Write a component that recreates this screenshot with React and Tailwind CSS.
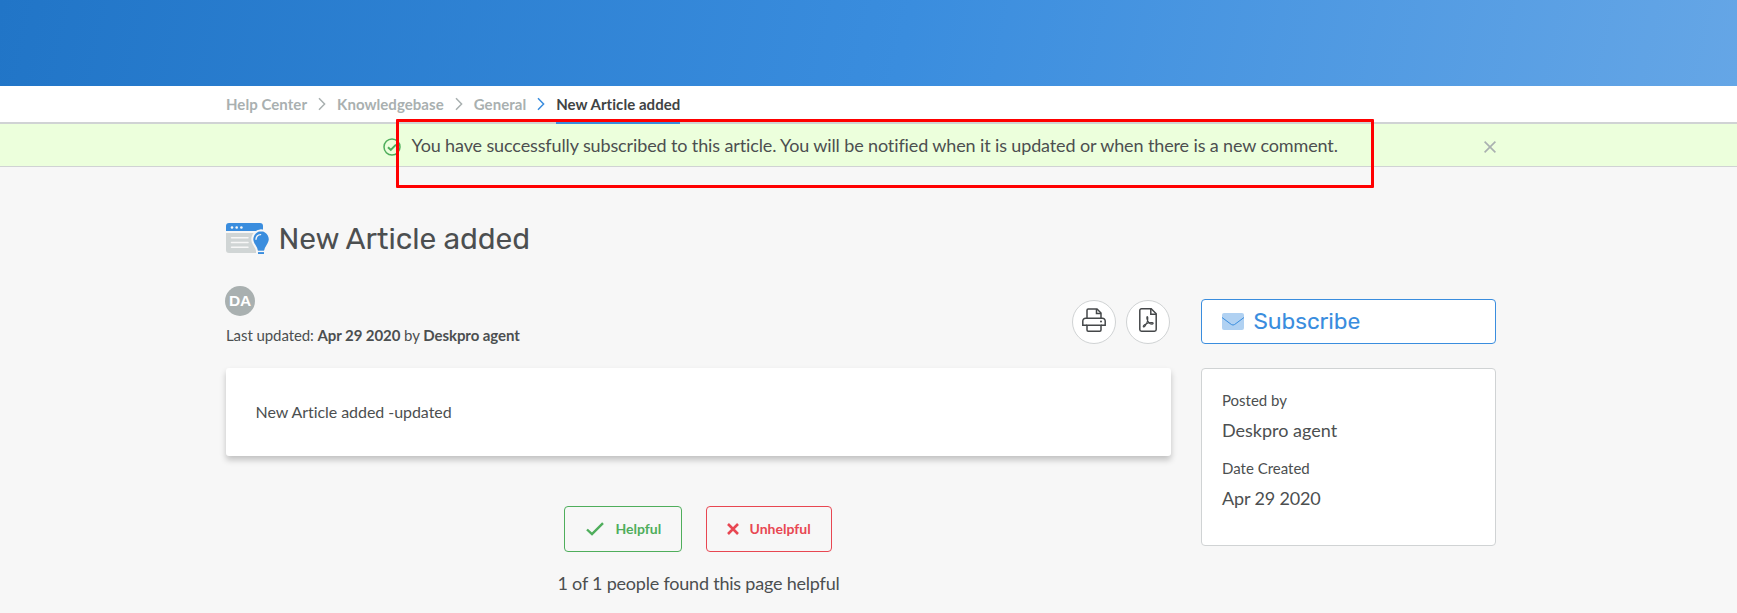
const LATO = "font-['Lato','Noto_Sans',sans-serif]";

function Chevron({ className }) {
  return (
    <svg className={className} width="8" height="14" viewBox="0 0 8 14" fill="none" stroke="currentColor" strokeWidth="1.5">
      <path d="M1 1.2 6.6 7 1 12.8" />
    </svg>
  );
}

function ArticleIcon() {
  return (
    <svg className="shrink-0" width="44" height="33" viewBox="0 0 44 33">
      <path d="M0 10h37v20H3a3 3 0 0 1-3-3z" fill="#d0d5d5" />
      <path d="M3 0h31a3 3 0 0 1 3 3v5H0V3a3 3 0 0 1 3-3z" fill="#3a8dde" />
      <g fill="#f7f7f7">
        <circle cx="6" cy="4.5" r="1.3" />
        <circle cx="10.7" cy="4.5" r="1.3" />
        <circle cx="15.4" cy="4.5" r="1.3" />
      </g>
      <path d="M5.500 14.800H22M5.500 19.500H22M5.500 24.200H22" stroke="#f7f7f7" strokeWidth="1.500" strokeLinecap="round" />
      <path d="M35 7.300a9 9 0 0 1 7.300 13.800c-1.500 2.300-3 4.300-3.300 7V32H31v-4c-.3-2.700-1.800-4.600-3.300-7A9 9 0 0 1 35 7.300z" fill="#3a8dde" stroke="#f7f7f7" strokeWidth="2" />
      <path d="M31 28.400h8" stroke="#f7f7f7" strokeWidth="1.400" />
      <path d="M30 16.300a5 5 0 0 1 4.600-4.700" fill="none" stroke="#f7f7f7" strokeWidth="1.400" strokeLinecap="round" />
    </svg>
  );
}

function PrinterIcon() {
  return (
    <svg width="24" height="24" viewBox="0 0 24 24" fill="none" stroke="#444749" strokeWidth="1.500">
      <path d="M5 10.500V2.200q0-1.200 1.200-1.200H15l4 4v5.500" />
      <path d="M14.500 1v4.500H19" />
      <path d="M5 17.200H.8V13a2.800 2.800 0 0 1 2.800-2.800h16.800A2.800 2.800 0 0 1 23.200 13v4.200H19" />
      <path d="M5 17.200h14v4.800q0 1.200-1.200 1.200H6.200Q5 23.200 5 22z" />
      <circle cx="19" cy="13.600" r="1" fill="#444749" stroke="none" />
    </svg>
  );
}

function PdfIcon() {
  return (
    <svg width="18" height="24" viewBox="0 0 18 24" fill="none" stroke="#444749" strokeWidth="1.500">
      <path d="M2.500.8h9.700l5 5v15.700a1.700 1.700 0 0 1-1.700 1.700h-13A1.700 1.700 0 0 1 .8 21.500v-19A1.700 1.700 0 0 1 2.500.8z" />
      <path d="M11.800 1v5.200H17" />
      <path d="M8.300 8.500c-1 .4-.4 2.600.3 4.200.8 1.800 2.600 3.300 4.500 3.400 1.300.1 1.600-1.200.2-1.500-2.400-.4-5.200.6-7 1.700-1.400.8-2.500 2-1.900 2.600.8.800 2.600-2.200 3.400-4 .8-1.900 1.700-6 .5-6.400z" strokeWidth="1.100" />
    </svg>
  );
}

function Crumb({ children }) {
  return <span className="text-[#a9b0b0]">{children}</span>;
}

export default function App() {
  return (
    <div className={`relative h-[613px] w-[1737px] overflow-hidden bg-[#f7f7f7] text-[#4c4f50] ${LATO}`}>
      <header className="h-[86px] bg-[linear-gradient(102deg,#2175c7_0%,#3a8dde_52%,#65a6e6_100%)]" />

      <nav className="h-[38px] border-b-2 border-[#d0d3d4] bg-white pl-[226px]">
        <div className="flex h-[38px] items-start text-[15px] leading-[37px] font-bold tracking-[0.050px] whitespace-nowrap">
          <Crumb>Help Center</Crumb>
          <Chevron className="mt-[11px] mr-[11px] ml-[11px] text-[#a9b0b0]" />
          <Crumb>Knowledgebase</Crumb>
          <Chevron className="mt-[11px] mr-[11px] ml-[11px] text-[#a9b0b0]" />
          <Crumb>General</Crumb>
          <Chevron className="mt-[11px] mr-[11px] ml-[11px] text-[#3a8dde]" />
          <span className="h-[38px] border-b-2 border-[#3a8dde] text-[#404344]">New Article added</span>
        </div>
      </nav>

      <div className="flex h-[43px] items-center border-b border-[#d0d3d4] bg-[#ecffdc] pr-[241px] pl-[383px]">
        <svg className="mt-[4px] shrink-0" width="18" height="18" viewBox="0 0 18 18" fill="none" stroke="#4fae5c">
          <circle cx="9" cy="9" r="8" strokeWidth="1.500" />
          <path d="m5 9.200 2.800 2.700L13 6.600" strokeWidth="2" />
        </svg>
        <p className="ml-[10.500px] text-[18px] leading-[42px] tracking-[-0.125px] whitespace-nowrap">
          You have successfully subscribed to this article. You will be notified when it is updated or when there is a new comment.
        </p>
        <svg className="mt-[4px] ml-auto shrink-0" width="12" height="12" viewBox="0 0 12 12" stroke="#a9b0b0" strokeWidth="1.600">
          <path d="m.6.6 10.800 10.800M11.400.6.6 11.400" />
        </svg>
      </div>

      <main className="flex flex-col pl-[226px]">
        <h1 className="mt-[54px] flex h-[36px] items-start">
          <span className="mt-[2px]"><ArticleIcon /></span>
          <span className="ml-[8.500px] font-['Rubik','Roboto',sans-serif] text-[30px] leading-[36px] font-normal tracking-[-0.060px] whitespace-nowrap">
            New Article added
          </span>
        </h1>

        <div className="mt-[29px] flex gap-[30px]">
          <section className="w-[945px]">
            <div className="flex h-[82px] justify-between">
              <div>
                <div className="-ml-px flex size-[30px] items-center justify-center rounded-full bg-[#a9b0b0] font-['Liberation_Sans',sans-serif] text-[15.500px] font-bold tracking-[-0.300px] text-white">
                  DA
                </div>
                <p className="mt-[8px] text-[15px] leading-[22px] tracking-[-0.080px] whitespace-nowrap">
                  Last updated: <b>Apr 29 2020</b> by <b>Deskpro agent</b>
                </p>
              </div>
              <div className="mt-[14px] mr-px flex gap-[10px]">
                <button className="flex size-[44px] items-center justify-center rounded-full border border-[#d0d3d4] bg-white pb-[4px]">
                  <PrinterIcon />
                </button>
                <button className="flex size-[44px] items-center justify-center rounded-full border border-[#d0d3d4] bg-white pb-[4px]">
                  <PdfIcon />
                </button>
              </div>
            </div>

            <article className="flex h-[88px] items-center rounded-[3px] bg-white pl-[29.500px] text-[16px] tracking-[-0.050px] shadow-[0_4px_6px_rgba(0,0,0,0.220)]">
              New Article added -updated
            </article>

            <div className="mt-[50px] mr-[2px] flex justify-center gap-[24px] text-[14px] font-bold">
              <button className="flex h-[46px] w-[118px] items-center rounded-[4px] border border-[#4fae5c] pl-[21px] text-[#4fae5c]">
                <svg width="18" height="14" viewBox="0 0 18 14" fill="none" stroke="currentColor" strokeWidth="2.400">
                  <path d="m1 7.500 5 4.700L17 1.200" />
                </svg>
                <span className="-mt-px ml-[12px]">Helpful</span>
              </button>
              <button className="flex h-[46px] w-[126px] items-center rounded-[4px] border border-[#e84752] pl-[20px] text-[#e84752]">
                <svg width="12" height="12" viewBox="0 0 12 12" stroke="currentColor" strokeWidth="2.600">
                  <path d="m1 1 10 10M11 1 1 11" />
                </svg>
                <span className="-mt-px ml-[11px]">Unhelpful</span>
              </button>
            </div>
            <p className="mt-[17px] text-center text-[18px] leading-[28px] tracking-[-0.210px]">1 of 1 people found this page helpful</p>
          </section>

          <aside className="w-[295px] pt-[13px]">
            <button className="flex h-[45px] w-full items-center rounded-[4px] border border-[#3a8dde] bg-white pl-[20px] text-[#3a8dde]">
              <svg width="22" height="17" viewBox="0 0 22 17">
                <rect width="22" height="17" rx="2" fill="#b0d1f2" />
                <path d="M0 4.500 9.400 11.500q1.600 1.100 3.200 0L22 4.500" fill="none" stroke="#3a8dde" strokeWidth="1" />
              </svg>
              <span className="ml-[9.500px] font-['Rubik','Roboto',sans-serif] text-[23px] tracking-[-0.030px]">Subscribe</span>
            </button>
            <dl className="mt-[24px] h-[178px] rounded-[4px] border border-[#d0d3d4] bg-white pt-[20px] pl-[20px]">
              <dt className="text-[15px] leading-[22px]">Posted by</dt>
              <dd className="mt-[5px] text-[18px] leading-[28px]">Deskpro agent</dd>
              <dt className="mt-[13px] text-[15px] leading-[22px]">Date Created</dt>
              <dd className="mt-[5px] text-[18px] leading-[28px] tracking-[-0.150px]">Apr 29 2020</dd>
            </dl>
          </aside>
        </div>
      </main>

      <div className="pointer-events-none absolute top-[119px] left-[396px] h-[69px] w-[978px] rounded-[1px] border-3 border-[#ff0000]" />
    </div>
  );
}
